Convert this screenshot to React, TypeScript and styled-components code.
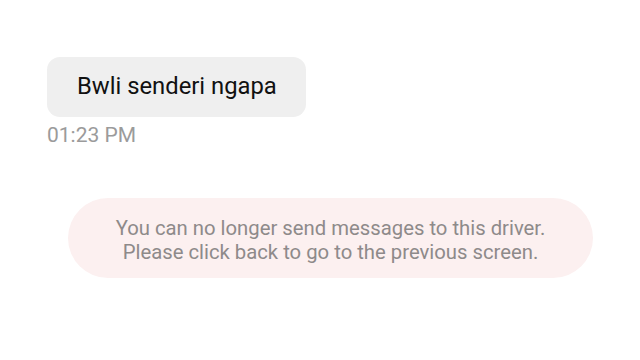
import React from "react";
import styled, { createGlobalStyle } from "styled-components";

const Global = createGlobalStyle`
  html, body {
    margin: 0;
    padding: 0;
    background: #ffffff;
  }
  body {
    font-family: Roboto, "Liberation Sans", sans-serif;
  }
`;

const Screen = styled.div`
  width: 640px;
  height: 360px;
  display: flex;
  flex-direction: column;
  padding: 57px 47px 0 47px;
  box-sizing: border-box;
`;

const Incoming = styled.div`
  display: flex;
  flex-direction: column;
  align-items: flex-start;
  gap: 6px;
`;

const Bubble = styled.div`
  background: #efefef;
  border-radius: 13px;
  padding: 15px 29px 16px 30px;
  font-size: 23.8px;
  line-height: 29px;
  color: #111111;
`;

const Time = styled.div`
  font-size: 21px;
  color: #9b9b9b;
  line-height: 25px;
`;

const Notice = styled.div`
  margin: 50px 0 0 21px;
  width: 525px;
  height: 80px;
  box-sizing: border-box;
  padding-top: 4px;
  border-radius: 40px;
  background: #fcf0f0;
  display: flex;
  flex-direction: column;
  align-items: center;
  justify-content: center;
  font-size: 20.3px;
  line-height: 24px;
  color: #8e8a8a;
  text-align: center;
`;

export default function App() {
  return (
    <>
      <Global />
      <Screen>
        <Incoming>
          <Bubble>Bwli senderi ngapa</Bubble>
          <Time>01:23 PM</Time>
        </Incoming>
        <Notice>
          <span>You can no longer send messages to this driver.</span>
          <span>Please click back to go to the previous screen.</span>
        </Notice>
      </Screen>
    </>
  );
}
